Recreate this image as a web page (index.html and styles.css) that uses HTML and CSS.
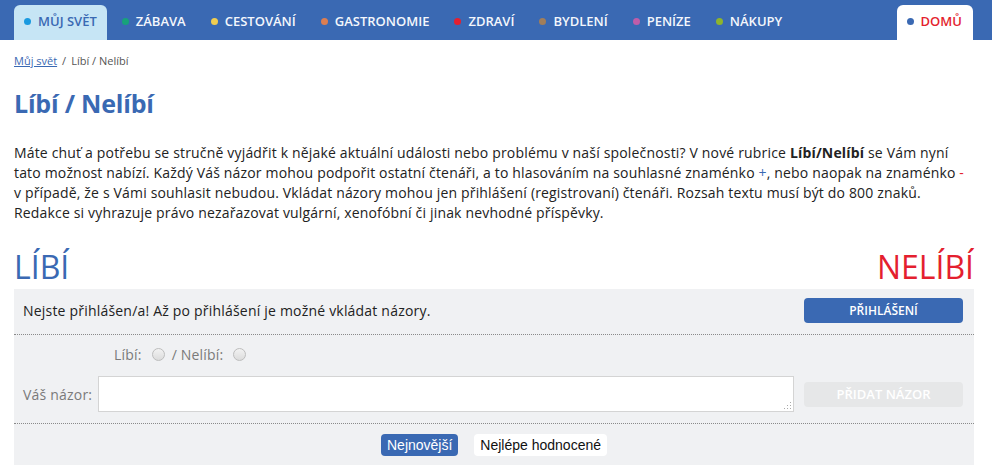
FILE: index.html
```html
<!DOCTYPE html>
<html lang="cs">
<head>
<meta charset="utf-8">
<title>Líbí / Nelíbí</title>
<link rel="stylesheet" href="styles.css">
</head>
<body>
<nav class="topnav">
  <div class="nav-inner">
    <ul class="nav-list">
      <li class="nav-item active"><span class="dot c-blue"></span>MŮJ SVĚT</li>
      <li class="nav-item"><span class="dot c-green"></span>ZÁBAVA</li>
      <li class="nav-item"><span class="dot c-yellow"></span>CESTOVÁNÍ</li>
      <li class="nav-item"><span class="dot c-orange"></span>GASTRONOMIE</li>
      <li class="nav-item"><span class="dot c-red"></span>ZDRAVÍ</li>
      <li class="nav-item"><span class="dot c-brown"></span>BYDLENÍ</li>
      <li class="nav-item"><span class="dot c-pink"></span>PENÍZE</li>
      <li class="nav-item"><span class="dot c-lime"></span>NÁKUPY</li>
    </ul>
    <div class="nav-item home"><span class="dot c-navy"></span>DOMŮ</div>
  </div>
</nav>

<main class="page">
  <div class="crumbs"><a href="#">Můj svět</a><span class="sep">/</span>Líbí / Nelíbí</div>
  <h1 class="title">Líbí / Nelíbí</h1>
  <p class="intro">Máte chuť a potřebu se stručně vyjádřit k nějaké aktuální události nebo problému v naší společnosti? V nové rubrice <b>Líbí/Nelíbí</b> se Vám nyní tato možnost nabízí. Každý Váš názor mohou podpořit ostatní čtenáři, a to hlasováním na souhlasné znaménko <span class="plus">+</span>, nebo naopak na znaménko <span class="minus">-</span> v případě, že s Vámi souhlasit nebudou. Vkládat názory mohou jen přihlášení (registrovaní) čtenáři. Rozsah textu musí být do 800 znaků. Redakce si vyhrazuje právo nezařazovat vulgární, xenofóbní či jinak nevhodné příspěvky.</p>

  <div class="heads">
    <span class="like">LÍBÍ</span>
    <span class="dislike">NELÍBÍ</span>
  </div>

  <section class="panel">
    <div class="row login-row">
      <span class="notice">Nejste přihlášen/a! Až po přihlášení je možné vkládat názory.</span>
      <button class="btn btn-blue">PŘIHLÁŠENÍ</button>
    </div>
    <div class="row form-row">
      <div class="vote">
        <span class="vote-label">Líbí:</span><span class="radio"></span>
        <span class="vote-label">/ Nelíbí:</span><span class="radio"></span>
      </div>
      <div class="opinion">
        <label class="opinion-label">Váš názor:</label>
        <div class="textarea"><span class="grip"></span></div>
        <button class="btn btn-gray">PŘIDAT NÁZOR</button>
      </div>
    </div>
    <div class="sort-row">
      <button class="pill pill-active">Nejnovější</button>
      <button class="pill">Nejlépe hodnocené</button>
    </div>
  </section>
</main>
</body>
</html>
```
FILE: styles.css
```css
* { box-sizing: border-box; }
html, body { margin: 0; padding: 0; background: #fff; }
body { font-family: "Open Sans", "Liberation Sans", sans-serif; color: #222; }

.topnav { background: #3a69b3; height: 40px; }
.nav-inner {
  width: 960px; margin-left: 14px; height: 40px;
  display: flex; justify-content: space-between; align-items: flex-end;
}
.nav-list { list-style: none; margin: 0; padding: 0; display: flex; align-items: flex-end; }
.nav-item {
  display: flex; align-items: center; height: 35px;
  padding: 0 10px 3px 10px; margin-right: 5px;
  color: #f4f7fc; font-size: 13px; font-weight: 600; letter-spacing: 0;
  border-radius: 6px 6px 0 0;
}
.nav-item.active { background: #c6e5f5; color: #3a69b3; }
.nav-item.home { background: #fff; color: #e41f2f; margin-right: 1px; padding-right: 11px; }
.dot { width: 7px; height: 7px; border-radius: 50%; margin-right: 7px; display: inline-block; }
.c-blue { background: #1a9ae0; }
.c-green { background: #17a27a; }
.c-yellow { background: #f0cd50; }
.c-orange { background: #dc7e52; }
.c-red { background: #e41f2f; }
.c-brown { background: #a17e5a; }
.c-pink { background: #bf5da9; }
.c-lime { background: #8db42c; }
.c-navy { background: #3a69b3; }

.page { width: 960px; margin-left: 14px; }

.crumbs { font-size: 11px; color: #555; margin-top: 13px; line-height: 15px; }
.crumbs a { color: #3a69b3; }
.sep { margin: 0 5px; }

.title { font-size: 25px; font-weight: 700; color: #3a69b3; margin: 17px 0 0 0; line-height: 36px; letter-spacing: -0.2px; }

.intro { font-size: 14px; line-height: 20px; margin: 22px 0 0 0; letter-spacing: 0.17px; color: #222; }
.plus { color: #3a69b3; }
.minus { color: #e41f2f; }

.heads { display: flex; justify-content: space-between; align-items: flex-end; margin-top: 20px; height: 46px; }
.like, .dislike { font-size: 32px; line-height: 44px; }
.like { color: #3a69b3; }
.dislike { color: #e41f2f; }

.panel { background: #f0f1f3; }
.row { border-bottom: 1px dotted #8a8a8a; }
.login-row {
  display: flex; justify-content: space-between; align-items: center;
  height: 46px; padding: 0 11px 2px 9px;
}
.notice { font-size: 14px; color: #222; letter-spacing: 0.2px; }

.btn {
  width: 159px; height: 25px; border: 0; border-radius: 4px;
  font-family: "Open Sans", sans-serif; font-size: 12px; font-weight: 600; color: #fff;
}
.btn-blue { background: #3a69b3; }
.btn-gray { background: #e6e7e8; font-size: 13px; }

.form-row { padding: 9px 11px 11px 9px; }
.vote { display: flex; align-items: center; padding-left: 91px; color: #7a7a7a; font-size: 14px; height: 20px; letter-spacing: 0.2px; }
.radio {
  width: 13px; height: 13px; border-radius: 50%; border: 1px solid #bdbdbd;
  background: linear-gradient(#f2f2f2, #dcdcdc); display: inline-block; margin: 0 7px 0 10px;
}
.opinion { display: flex; align-items: center; margin-top: 12px; }
.opinion-label { color: #7a7a7a; font-size: 14px; width: 75px; letter-spacing: 0.2px; }
.textarea {
  width: 696px; height: 36px; background: #fff; border: 1px solid #d4d4d4; position: relative;
}
.grip {
  position: absolute; right: 2px; bottom: 2px; width: 8px; height: 8px;
  background:
    radial-gradient(circle, #aaa 0.8px, transparent 1px) 0 0 / 3px 3px;
  clip-path: polygon(100% 0, 100% 100%, 0 100%);
}
.opinion .btn { margin-left: 10px; }

.sort-row { display: flex; justify-content: center; gap: 16px; padding: 10px 0 9px; }
.pill {
  font-family: "Liberation Sans", Arial, sans-serif; font-size: 14px; height: 22px;
  border: 0; border-radius: 4px; background: #fff; color: #111; padding: 0 6px;
}
.pill-active { background: #3a69b3; color: #fff; }
```
